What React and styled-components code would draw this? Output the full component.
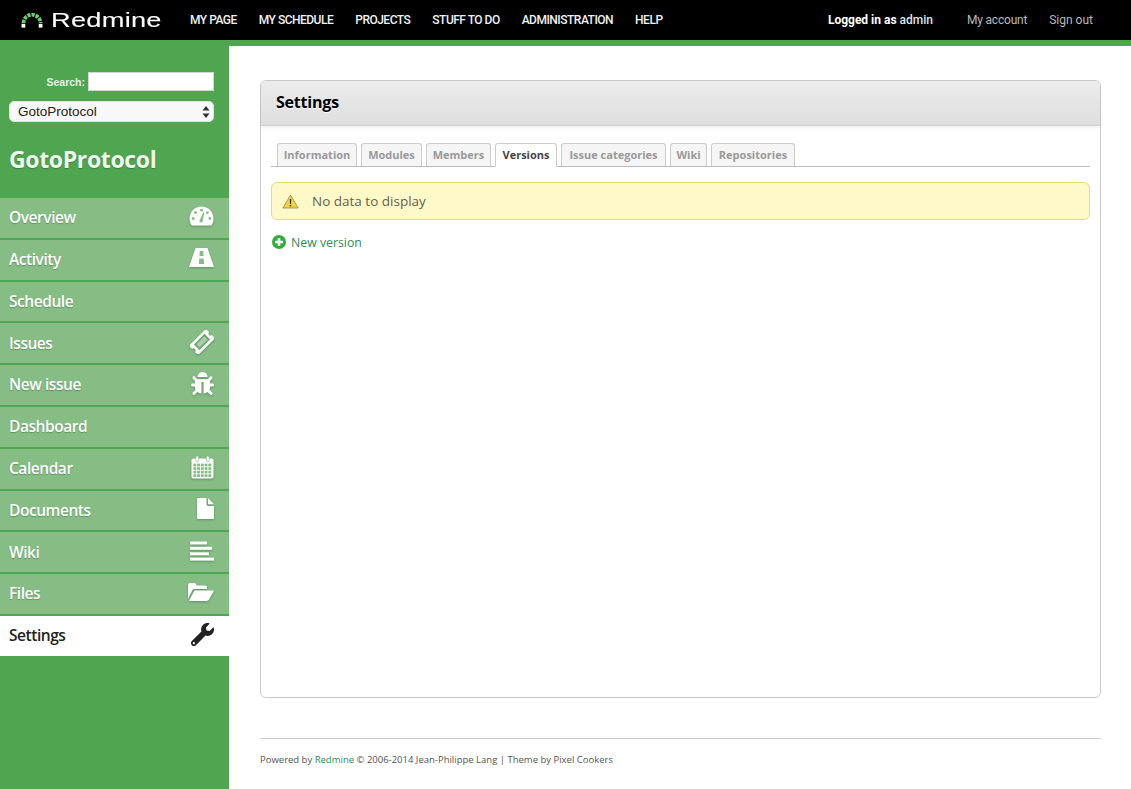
import React from "react";
import styled, { createGlobalStyle } from "styled-components";
import { FaBug, FaWrench } from "react-icons/fa";

const GlobalStyle = createGlobalStyle`
  html, body { margin: 0; padding: 0; background: #fff; }
  body { font-family: "Open Sans", "DejaVu Sans", sans-serif; color: #555; }
  * { box-sizing: border-box; }
  a { text-decoration: none; color: inherit; }
`;

const Page = styled.div`
  min-height: 789px;
  display: flex;
  flex-direction: column;
`;

const Top = styled.header`
  height: 46px;
  flex: none;
  background: #000;
  border-bottom: 6px solid #50a551;
  display: flex;
  align-items: center;
  padding-left: 21px;
  color: #fff;
`;

const Logo = styled.div`
  width: 169px;
  display: flex;
  align-items: center;
  gap: 8px;
`;

const LogoText = styled.span`
  font-family: "Liberation Sans", sans-serif;
  font-size: 20px;
  line-height: 20px;
  letter-spacing: 0.2px;
  -webkit-text-stroke: 0.1px #fff;
  display: inline-block;
  transform: scaleX(1.36);
  transform-origin: left center;
`;

const TopNav = styled.nav`
  display: flex;
  gap: 22px;
  flex: 1;
`;

const TopLink = styled.a`
  font-family: Roboto, sans-serif;
  font-size: 12px;
  font-weight: 500;
  letter-spacing: -0.5px;
  color: #eef2f5;
  line-height: 16px;
`;

const UserArea = styled.div`
  display: flex;
  align-items: center;
  font-family: Roboto, sans-serif;
  font-size: 12px;
  line-height: 16px;
  padding-right: 38px;
  color: #b9b9b9;
`;

const LoggedAs = styled.span`
  color: #fff;
  font-weight: 700;
  margin-right: 34px;
  span { font-weight: 500; color: #dfe4e8; }
`;

const UserLink = styled.a`
  margin-left: ${(p) => (p.$first ? "0" : "22px")};
  letter-spacing: ${(p) => (p.$first ? "-0.2px" : "0")};
`;

const Body = styled.div`
  flex: 1;
  display: flex;
`;

const Sidebar = styled.aside`
  width: 229px;
  flex: none;
  background: #50a551;
  padding-top: 26px;
`;

const SearchRow = styled.div`
  display: flex;
  justify-content: flex-end;
  align-items: center;
  gap: 3px;
  padding-right: 15px;
`;

const SearchLabel = styled.label`
  font-family: "Liberation Sans", sans-serif;
  font-size: 10.500px;
  font-weight: 700;
  color: #e4f2e4;
`;

const SearchInput = styled.input`
  width: 126px;
  height: 19px;
  border: 1px solid #cfd8cf;
  background: #fff;
  padding: 0;
`;

const SelectWrap = styled.div`
  position: relative;
  margin: 10px 15px 0 9px;
  height: 21px;
`;

const ProjectSelect = styled.select`
  appearance: none;
  display: block;
  width: 100%;
  height: 21px;
  border: 1px solid #dbe6db;
  border-radius: 5px;
  background: #f8f8f8;
  font-family: "Liberation Sans", sans-serif;
  font-size: 13.500px;
  color: #222;
  padding: 0 0 0 8px;
  outline: none;
`;

const SelectArrows = styled.svg`
  position: absolute;
  right: 4px;
  top: 5px;
  pointer-events: none;
`;

const ProjectName = styled.h1`
  margin: 18px 0 0 9px;
  height: 56px;
  font-size: 23px;
  line-height: 39px;
  font-weight: 700;
  letter-spacing: -0.35px;
  color: #eef7ee;
  text-shadow: 0 1px 1px rgba(0, 0, 0, 0.25);
`;

const Menu = styled.ul`
  list-style: none;
  margin: 0;
  padding: 0;
`;

const MenuItem = styled.li`
  height: 41.800px;
  border-top: 2px solid #50a551;
  background: ${(p) => (p.$active ? "#fff" : "#85bd85")};
  color: ${(p) => (p.$active ? "#222" : "#fff")};
  display: flex;
  align-items: center;
  justify-content: space-between;
  padding: 0 15px 3.500px 9px;
  font-size: 15.500px;
  font-weight: 600;
  letter-spacing: -0.45px;
  text-shadow: ${(p) => (p.$active ? "none" : "0 1px 1px rgba(0, 0, 0, 0.25)")};
  span {
    margin-top: 2px;
  }
  svg {
    display: block;
    filter: ${(p) => (p.$active ? "none" : "drop-shadow(0 1px 1px rgba(0, 0, 0, 0.25))")};
  }
`;

const Main = styled.main`
  flex: 1;
  min-width: 0;
  padding: 34px 30px 0 31px;
  display: flex;
  flex-direction: column;
`;

const Card = styled.section`
  height: 618px;
  flex: none;
  border: 1px solid #c9c9c9;
  border-radius: 6px;
  background: #fff;
`;

const CardHead = styled.div`
  height: 45px;
  border-bottom: 1px solid #cfcfcf;
  border-radius: 5px 5px 0 0;
  background: linear-gradient(#ececec, #dedede);
  box-shadow: 0 2px 3px rgba(0, 0, 0, 0.06);
  display: flex;
  align-items: center;
  padding: 0 0 2px 15px;
`;

const CardTitle = styled.h2`
  margin: 0;
  font-size: 16px;
  font-weight: 700;
  letter-spacing: -0.2px;
  color: #000;
  text-shadow: 0 1px 0 #fff;
`;

const CardBody = styled.div`
  padding: 17px 10px 0;
`;

const Tabs = styled.div`
  display: flex;
  gap: 4px;
  height: 24px;
  padding-left: 6px;
  border-bottom: 1px solid #bbb;
`;

const Tab = styled.a`
  width: ${(p) => p.$width}px;
  height: ${(p) => (p.$active ? "24px" : "23px")};
  border: 1px solid #ccc;
  border-bottom: ${(p) => (p.$active ? "1px solid #fff" : "none")};
  border-radius: 3px 3px 0 0;
  background: ${(p) => (p.$active ? "#fff" : "#f5f5f5")};
  color: ${(p) => (p.$active ? "#444" : "#999")};
  font-size: 11px;
  font-weight: 700;
  line-height: 21px;
  text-align: center;
`;

const Flash = styled.div`
  margin-top: 15px;
  height: 38px;
  border: 1px solid #e8dd73;
  border-radius: 6px;
  background: #fff9c9;
  display: flex;
  align-items: center;
  padding-left: 10px;
  gap: 13px;
  font-size: 13.500px;
  color: #665f45;
`;

const NewLink = styled.a`
  margin-top: 13px;
  display: flex;
  align-items: center;
  gap: 5px;
  height: 18px;
  padding-left: 1px;
  font-size: 12.300px;
  color: #2f8a5c;
`;

const Footer = styled.footer`
  margin-top: 40px;
  border-top: 1px solid #ccc;
  padding-top: 14px;
  font-size: 9.500px;
  line-height: 13px;
  color: #555;
  a { color: #2e8b4f; }
`;

const GREEN = "#85bd85";

function Gauge() {
  return (
    <svg width="25" height="20" viewBox="0 0 25 20">
      <path fill="#fff" d="M12.500 0.500C5.800 0.500.5 5.800.5 12.500c0 2.300.6 4.400 1.700 6.300.3.500.8.700 1.300.700h18c.5 0 1-.2 1.300-.7 1.100-1.900 1.700-4 1.700-6.300C24.500 5.800 19.200.5 12.500.5Z" />
      <circle cx="4.200" cy="12.500" r="1.400" fill={GREEN} />
      <circle cx="6.600" cy="6.700" r="1.400" fill={GREEN} />
      <circle cx="12.500" cy="4.200" r="1.400" fill={GREEN} />
      <circle cx="20.800" cy="12.500" r="1.400" fill={GREEN} />
      <circle cx="18.400" cy="6.700" r="1.400" fill={GREEN} />
      <path d="M11.200 13.300 14.200 6.300 15.300 6.700 13.800 14.200A1.700 1.700 0 1 1 11.200 13.300Z" fill={GREEN} />
    </svg>
  );
}

function Road() {
  return (
    <svg width="25" height="19" viewBox="0 0 25 19">
      <path fill="#fff" d="M6.500 0H18.500L25 19H0Z" />
      <path fill={GREEN} d="M10.800 3H14.200L14.500 8H10.500ZM10.300 10.500H14.700L15.100 16H9.900Z" />
    </svg>
  );
}

function Ticket() {
  return (
    <svg width="24" height="24" viewBox="0 0 24 24">
      <g transform="rotate(-45 12 12)">
        <path
          fill="#fff"
          fillRule="evenodd"
          d="M0 5.500H24V10A2 2 0 0 0 24 14V18.500H0V14A2 2 0 0 0 0 10ZM4.500 8V16H19.500V8Z"
        />
        <rect x="6.500" y="9.800" width="11" height="4.400" fill="#a5d0a5" />
      </g>
    </svg>
  );
}

function Calendar() {
  const cells = [];
  for (let r = 0; r < 4; r++) {
    for (let c = 0; c < 5; c++) {
      cells.push(<rect key={`${r}-${c}`} x={2.5 + c * 3.9} y={8.5 + r * 3.7} width="3" height="2.800" fill={GREEN} />);
    }
  }
  return (
    <svg width="23" height="24" viewBox="0 0 24 24">
      <rect x="0.500" y="3" width="23" height="21" rx="2" fill="#fff" />
      <rect x="5" y="0.500" width="3" height="6" rx="1.500" fill="#fff" stroke={GREEN} strokeWidth="0.700" />
      <rect x="16" y="0.500" width="3" height="6" rx="1.500" fill="#fff" stroke={GREEN} strokeWidth="0.700" />
      {cells}
    </svg>
  );
}

function Doc() {
  return (
    <svg width="17" height="21" viewBox="0 0 17 21">
      <path fill="#fff" d="M1 0H9.500V6.500A1.500 1.500 0 0 0 11 8H17V20A1 1 0 0 1 16 21H1A1 1 0 0 1 0 20V1A1 1 0 0 1 1 0Z" />
      <path fill="#fff" d="M11 0 17 6.300H11Z" />
    </svg>
  );
}

function Lines() {
  return (
    <svg width="24" height="20" viewBox="0 0 24 20">
      <rect x="0" y="0.500" width="17" height="3" fill="#fff" />
      <rect x="0" y="5.800" width="22" height="3" fill="#fff" />
      <rect x="0" y="11.300" width="19" height="3" fill="#fff" />
      <rect x="0" y="16.600" width="24" height="3" fill="#fff" />
    </svg>
  );
}

function FolderOpen() {
  return (
    <svg width="26" height="20" viewBox="0 0 26 20">
      <path fill="#fff" d="M0 17V3a2 2 0 0 1 2-2h5l2 2.500h8a2 2 0 0 1 2 2V7H6.500a2.500 2.500 0 0 0-2.200 1.300Z" />
      <path fill="#fff" d="M6.500 8.500H26L20.800 17.800a2.500 2.500 0 0 1-2 1.200H1Z" />
    </svg>
  );
}

const items = [
  { label: "Overview", icon: <Gauge /> },
  { label: "Activity", icon: <Road /> },
  { label: "Schedule" },
  { label: "Issues", icon: <Ticket /> },
  { label: "New issue", icon: <FaBug size={23} color="#fff" /> },
  { label: "Dashboard" },
  { label: "Calendar", icon: <Calendar /> },
  { label: "Documents", icon: <Doc /> },
  { label: "Wiki", icon: <Lines /> },
  { label: "Files", icon: <FolderOpen /> },
  { label: "Settings", icon: <FaWrench size={23} color="#222" />, active: true },
];

const tabs = [
  { label: "Information", width: 80 },
  { label: "Modules", width: 61 },
  { label: "Members", width: 65 },
  { label: "Versions", width: 62, active: true },
  { label: "Issue categories", width: 105 },
  { label: "Wiki", width: 37 },
  { label: "Repositories", width: 84 },
];
const topLinks = ["MY PAGE", "MY SCHEDULE", "PROJECTS", "STUFF TO DO", "ADMINISTRATION", "HELP"];

export default function App() {
  return (
    <Page>
      <GlobalStyle />
      <Top>
        <Logo>
          <svg width="22" height="15" viewBox="0 0 22 15">
            <path d="M2.500 10A8.500 8.300 0 0 1 19.500 10" fill="none" stroke="#6fcb6f" strokeWidth="3.800" strokeDasharray="3.200 1" />
            <rect x="0.500" y="10.800" width="3.800" height="3.800" fill="#fff" />
            <rect x="17.700" y="10.800" width="3.800" height="3.800" fill="#fff" />
          </svg>
          <LogoText>Redmine</LogoText>
        </Logo>
        <TopNav>
          {topLinks.map((l) => (
            <TopLink key={l} href="#">{l}</TopLink>
          ))}
        </TopNav>
        <UserArea>
          <LoggedAs>Logged in as <span>admin</span></LoggedAs>
          <UserLink $first href="#">My account</UserLink>
          <UserLink href="#">Sign out</UserLink>
        </UserArea>
      </Top>
      <Body>
        <Sidebar>
          <SearchRow>
            <SearchLabel>Search:</SearchLabel>
            <SearchInput />
          </SearchRow>
          <SelectWrap>
            <ProjectSelect defaultValue="GotoProtocol">
              <option>GotoProtocol</option>
            </ProjectSelect>
            <SelectArrows width="8" height="12" viewBox="0 0 8 12">
              <path d="M4 0 7.500 4.500H.5ZM4 12 .5 7.500H7.500Z" fill="#333" />
            </SelectArrows>
          </SelectWrap>
          <ProjectName>GotoProtocol</ProjectName>
          <Menu>
            {items.map((it) => (
              <MenuItem key={it.label} $active={it.active}>
                <span>{it.label}</span>
                {it.icon}
              </MenuItem>
            ))}
          </Menu>
        </Sidebar>
        <Main>
          <Card>
            <CardHead>
              <CardTitle>Settings</CardTitle>
            </CardHead>
            <CardBody>
              <Tabs>
                {tabs.map((t) => (
                  <Tab key={t.label} href="#" $width={t.width} $active={t.active}>{t.label}</Tab>
                ))}
              </Tabs>
              <Flash>
                <svg width="17" height="15" viewBox="0 0 17 15">
                  <path d="M8.500 1 16.200 14H.8Z" fill="#f0d53a" stroke="#8a8a50" strokeWidth="0.800" strokeLinejoin="round" />
                  <path d="M7.800 5h1.400l-.2 5H8ZM7.800 11h1.400v1.500H7.800Z" fill="#333" />
                </svg>
                <span>No data to display</span>
              </Flash>
              <NewLink href="#">
                <svg width="14" height="14" viewBox="0 0 14 14">
                  <circle cx="7" cy="7" r="7" fill="#2fae3a" />
                  <path d="M5.700 3h2.600v2.700H11v2.600H8.300V11H5.700V8.300H3V5.700h2.700Z" fill="#fff" />
                </svg>
                New version
              </NewLink>
            </CardBody>
          </Card>
          <Footer>
            Powered by <a href="#">Redmine</a> © 2006-2014 Jean-Philippe Lang | Theme by Pixel Cookers
          </Footer>
        </Main>
      </Body>
    </Page>
  );
}
